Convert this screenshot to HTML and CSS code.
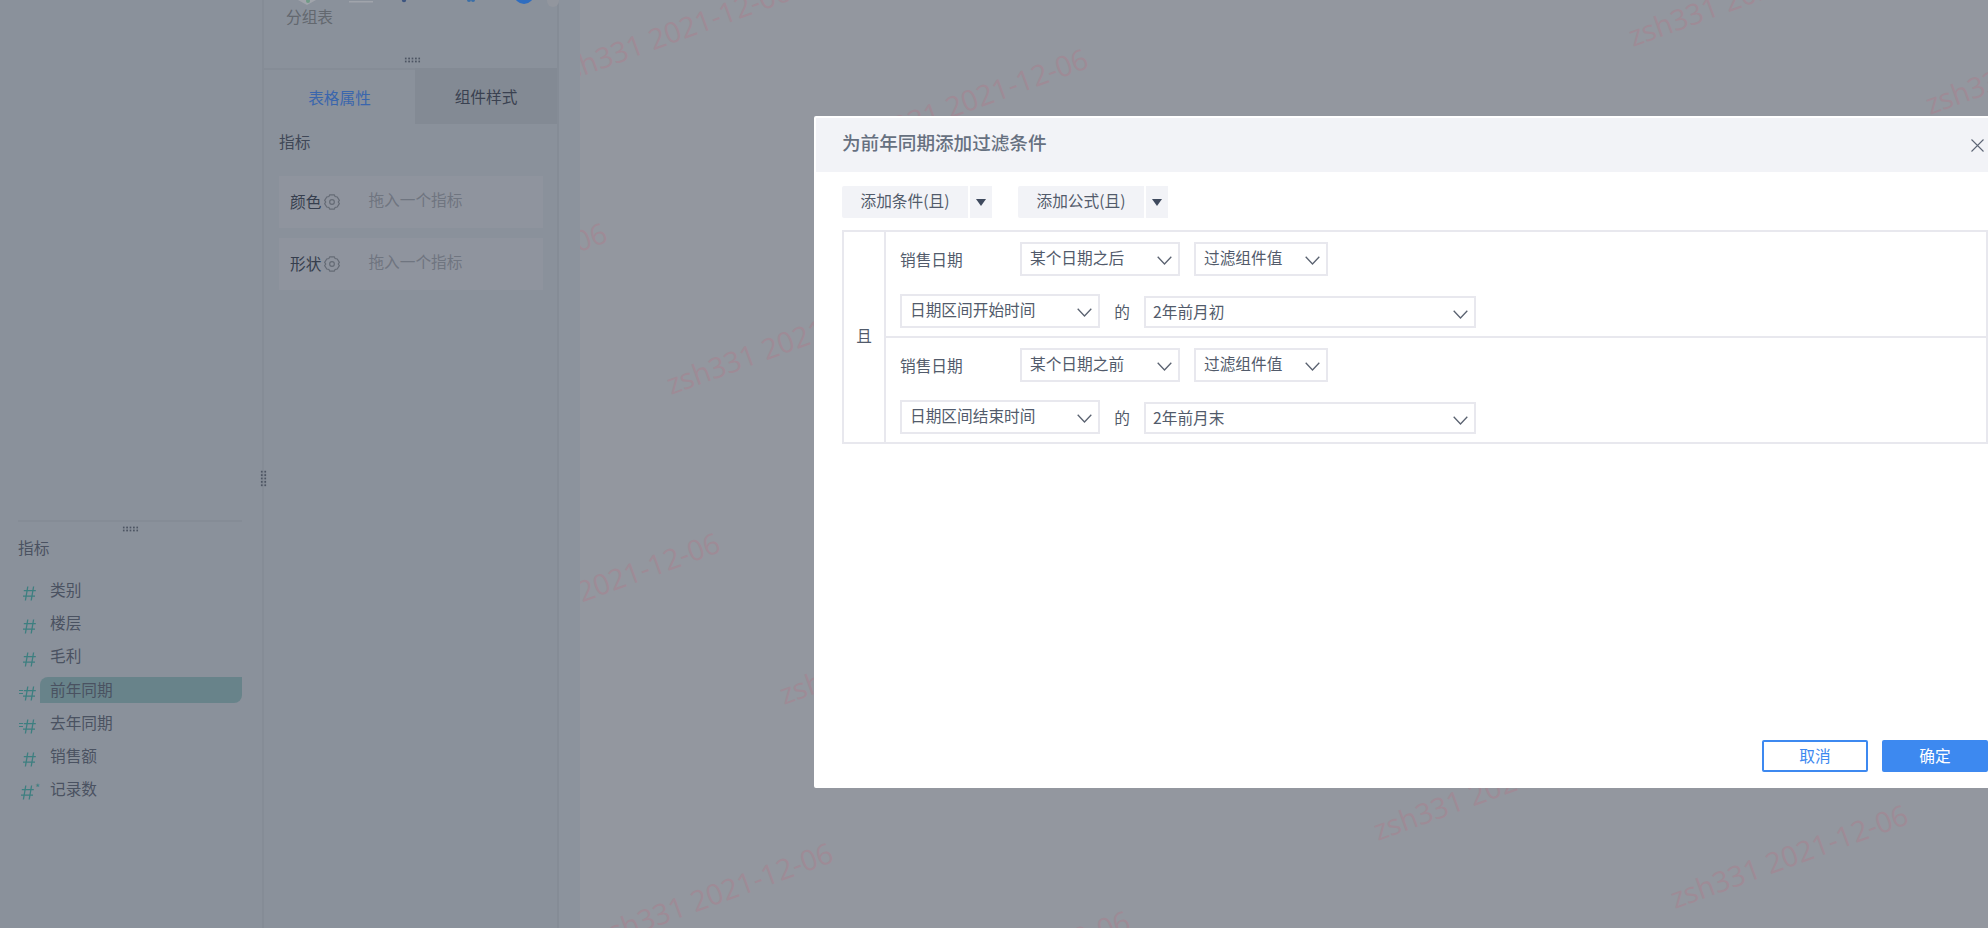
FILE: index.html
```html
<!DOCTYPE html>
<html lang="zh-CN">
<head>
    <meta charset="UTF-8">
    <meta name="viewport" content="width=device-width, initial-scale=1.0">
    <title>为前年同期添加过滤条件</title>
    <link rel="stylesheet" href="styles.css">
</head>
<body>
    <svg class="defs" width="0" height="0">
        <symbol id="hash" viewBox="0 0 13 15">
            <path d="M4.8 0.5 L2.4 14.5 M10.6 0.5 L8.2 14.5 M0.8 4.6 H12.8 M0 10.2 H12" fill="none" stroke="currentColor" stroke-width="1.3"/>
        </symbol>
        <symbol id="chevron" viewBox="0 0 15 9">
            <path d="M0.7 0.8 L7.5 8 L14.3 0.8" fill="none" stroke="currentColor" stroke-width="1.3"/>
        </symbol>
        <symbol id="gear" viewBox="0 0 15 15">
            <path d="M5.4 0.8 H9.6 L10.4 2.4 L12.4 2.8 L14.4 6 L13.4 7.5 L14.4 9 L12.4 12.2 L10.4 12.6 L9.6 14.2 H5.4 L4.6 12.6 L2.6 12.2 L0.6 9 L1.6 7.5 L0.6 6 L2.6 2.8 L4.6 2.4 Z" fill="none" stroke="currentColor" stroke-width="1.1"/>
            <circle cx="7.5" cy="7.5" r="2.2" fill="none" stroke="currentColor" stroke-width="1.1"/>
        </symbol>
    </svg>

    <div class="app">
        <aside class="fields-panel">
            <div class="panel-rule"></div>
            <div class="drag-dots fields-dots"></div>
            <h3 class="fields-title">指标</h3>
            <ul class="field-list">
                <li class="field-row"><span class="field-icon"><svg class="hash"><use href="#hash"/></svg></span><span>类别</span></li>
                <li class="field-row"><span class="field-icon"><svg class="hash"><use href="#hash"/></svg></span><span>楼层</span></li>
                <li class="field-row"><span class="field-icon"><svg class="hash"><use href="#hash"/></svg></span><span>毛利</span></li>
                <li class="field-row selected"><span class="field-icon"><i class="calc-mark"></i><svg class="hash"><use href="#hash"/></svg></span><span class="field-name">前年同期</span></li>
                <li class="field-row"><span class="field-icon"><i class="calc-mark"></i><svg class="hash"><use href="#hash"/></svg></span><span>去年同期</span></li>
                <li class="field-row"><span class="field-icon"><svg class="hash"><use href="#hash"/></svg></span><span>销售额</span></li>
                <li class="field-row"><span class="field-icon count"><svg class="hash"><use href="#hash"/></svg><i class="star">*</i></span><span>记录数</span></li>
            </ul>
            <div class="side-handle"></div>
        </aside>

        <section class="props-panel">
            <div class="chart-types">
                <svg class="type-strip" width="295" height="7" viewBox="0 0 295 7">
                    <path d="M33 -6 L52 0 L43 5 L34 0 Z" fill="#a0a4ab"/>
                    <circle cx="44" cy="1" r="2" fill="#6f9a86"/>
                    <rect x="85" y="1" width="24" height="1.5" fill="#a0a4ab"/>
                    <circle cx="140" cy="0" r="2.2" fill="#3d5580"/>
                    <circle cx="205" cy="0" r="2" fill="#3b6fa8"/>
                    <circle cx="209" cy="0" r="2" fill="#3b6fa8"/>
                    <circle cx="260" cy="-6" r="10" fill="#2f6dc0"/>
                    <circle cx="289" cy="1" r="6" fill="#92969e"/>
                </svg>
                <div class="type-name">分组表</div>
                <div class="drag-dots types-dots"></div>
            </div>
            <div class="tabs">
                <div class="tab active">表格属性</div>
                <div class="tab">组件样式</div>
            </div>
            <div class="props-body">
                <h3 class="props-title">指标</h3>
                <div class="drop-box">
                    <span class="drop-label">颜色</span>
                    <svg class="gear"><use href="#gear"/></svg>
                    <span class="drop-hint">拖入一个指标</span>
                </div>
                <div class="drop-box">
                    <span class="drop-label">形状</span>
                    <svg class="gear"><use href="#gear"/></svg>
                    <span class="drop-hint">拖入一个指标</span>
                </div>
            </div>
        </section>

        <div class="band"></div>

        <main class="canvas">
            <svg class="watermarks" viewBox="580 0 1408 928">
                <text transform="translate(1633 47) rotate(-20)">zsh331 2021-12-06</text>
                <text transform="translate(1930 115) rotate(-20)">zsh331 2021-12-06</text>
                <text transform="translate(558 85) rotate(-20)">zsh331 2021-12-06</text>
                <text transform="translate(855 153) rotate(-20)">zsh331 2021-12-06</text>
                <text transform="translate(374 327) rotate(-20)">zsh331 2021-12-06</text>
                <text transform="translate(671 395) rotate(-20)">zsh331 2021-12-06</text>
                <text transform="translate(487 637) rotate(-20)">zsh331 2021-12-06</text>
                <text transform="translate(784 705) rotate(-20)">zsh331 2021-12-06</text>
                <text transform="translate(1378 841) rotate(-20)">zsh331 2021-12-06</text>
                <text transform="translate(1675 909) rotate(-20)">zsh331 2021-12-06</text>
                <text transform="translate(600 947) rotate(-20)">zsh331 2021-12-06</text>
                <text transform="translate(897 1015) rotate(-20)">zsh331 2021-12-06</text>
            </svg>
        </main>
    </div>

    <div class="modal">
        <div class="modal-header">
            <span class="modal-title">为前年同期添加过滤条件</span>
            <svg class="close" width="13" height="13" viewBox="0 0 13 13"><path d="M0.5 0.5 L12.5 12.5 M12.5 0.5 L0.5 12.5" stroke="#5d6675" stroke-width="1.1"/></svg>
        </div>
        <div class="modal-body">
            <div class="toolbar">
                <div class="add-group">
                    <button class="add-btn">添加条件(且)</button>
                    <button class="caret-btn"><i class="caret"></i></button>
                </div>
                <div class="add-group">
                    <button class="add-btn">添加公式(且)</button>
                    <button class="caret-btn"><i class="caret"></i></button>
                </div>
            </div>
            <div class="filter-table">
                <div class="logic-cell">且</div>
                <div class="filter-rows">
                    <div class="filter-row">
                        <div class="line">
                            <span class="line-label">销售日期</span>
                            <div class="select w160"><span>某个日期之后</span><svg class="chevron"><use href="#chevron"/></svg></div>
                            <div class="select w134"><span>过滤组件值</span><svg class="chevron"><use href="#chevron"/></svg></div>
                        </div>
                        <div class="line second">
                            <div class="select w200"><span>日期区间开始时间</span><svg class="chevron"><use href="#chevron"/></svg></div>
                            <span class="of">的</span>
                            <div class="select w332"><span>2年前月初</span><svg class="chevron"><use href="#chevron"/></svg></div>
                        </div>
                    </div>
                    <div class="filter-row">
                        <div class="line">
                            <span class="line-label">销售日期</span>
                            <div class="select w160"><span>某个日期之前</span><svg class="chevron"><use href="#chevron"/></svg></div>
                            <div class="select w134"><span>过滤组件值</span><svg class="chevron"><use href="#chevron"/></svg></div>
                        </div>
                        <div class="line second">
                            <div class="select w200"><span>日期区间结束时间</span><svg class="chevron"><use href="#chevron"/></svg></div>
                            <span class="of">的</span>
                            <div class="select w332"><span>2年前月末</span><svg class="chevron"><use href="#chevron"/></svg></div>
                        </div>
                    </div>
                </div>
            </div>
        </div>
        <div class="modal-footer">
            <button class="btn-cancel">取消</button>
            <button class="btn-ok">确定</button>
        </div>
    </div>
</body>
</html>
```

FILE: styles.css
```css
* {
    box-sizing: border-box;
}

html, body {
    margin: 0;
    padding: 0;
    height: 100%;
    overflow: hidden;
}

body {
    font-family: "Noto Sans CJK SC", "Noto Sans", sans-serif;
    font-size: 15.7px;
    color: #4a5261;
    background: #8a919b;
    position: relative;
}

h3 {
    margin: 0;
    font-size: inherit;
    font-weight: 400;
}

.defs {
    position: absolute;
}

.app {
    display: flex;
    height: 928px;
}

/* left column */
.fields-panel {
    position: relative;
    width: 264px;
    flex: none;
    padding: 520px 20px 0 18px;
    border-right: 2px solid #858c96;
}

.panel-rule {
    height: 2px;
    background: #858c96;
}

.drag-dots {
    width: 17px;
    height: 6px;
    background-image: radial-gradient(circle, #4d5563 0.9px, transparent 1.2px);
    background-size: 3.4px 3px;
}

.fields-dots {
    margin: 4px auto 0;
}

.fields-title {
    margin-top: 6px;
    line-height: 20px;
}

.field-list {
    list-style: none;
    margin: 14.5px 0 0;
    padding: 0;
}

.field-row {
    display: flex;
    align-items: center;
    height: 33.3px;
}

.field-icon {
    width: 32px;
    display: flex;
    align-items: center;
    justify-content: flex-start;
    padding-left: 5px;
    color: #3d7f80;
    flex: none;
    position: relative;
    top: 4px;
}

.hash {
    width: 13px;
    height: 15px;
    flex: none;
}

.calc-mark {
    position: absolute;
    left: 1px;
    top: 4px;
    width: 4px;
    height: 4px;
    border-top: 1px solid #3d7f80;
    border-bottom: 1px solid #3d7f80;
}

.field-icon.count {
    padding-left: 3px;
}

.star {
    font-style: normal;
    font-size: 11px;
    line-height: 1;
    margin: -10px 0 0 1px;
}

.field-row.selected {
    position: relative;
}

.field-row.selected::before {
    content: "";
    position: absolute;
    left: 22px;
    right: 0;
    top: 5px;
    height: 26px;
    background: #68838a;
    border-radius: 8px 0 8px 0;
}

.field-row.selected .field-icon,
.field-row.selected .field-name {
    z-index: 1;
    position: relative;
}

.side-handle {
    position: absolute;
    right: -5px;
    top: 470px;
    width: 7px;
    height: 17px;
    background-image: radial-gradient(circle, #4d5563 1px, transparent 1.4px);
    background-size: 3.5px 3.4px;
}

/* middle column */
.props-panel {
    width: 295px;
    flex: none;
    border-right: 2px solid #858c96;
}

.chart-types {
    height: 68px;
}

.type-strip {
    display: block;
}

.type-name {
    line-height: 20px;
    padding-left: 22px;
    color: #63686f;
}

.types-dots {
    margin: 30px 0 0 140px;
}

.tabs {
    display: flex;
    height: 56px;
}

.tab {
    display: flex;
    align-items: center;
    justify-content: center;
    color: #3a4150;
    width: 151px;
}

.tab.active {
    color: #3a66ad;
    border-top: 2px solid #858c96;
}

.tab:not(.active) {
    flex: 1;
    background: #838a94;
}

.props-body {
    padding: 8px 14px 0 15px;
}

.props-title {
    line-height: 20px;
    margin-bottom: 24px;
    color: #3f4756;
}

.drop-box {
    display: flex;
    align-items: center;
    height: 52px;
    margin-bottom: 10px;
    padding-left: 11px;
    background: #8f949e;
    color: #363e4d;
}

.drop-label {
    margin-bottom: 2px;
}

.gear {
    width: 16px;
    height: 16px;
    color: #656b75;
    margin-left: 3px;
    flex: none;
}

.drop-hint {
    margin: 0 0 6px 28px;
    color: #6f7580;
}

/* right side */
.band {
    width: 21px;
    flex: none;
    background: #8c939d;
}

.canvas {
    flex: 1;
    position: relative;
    background: #93979f;
    overflow: hidden;
}

.watermarks {
    position: absolute;
    left: 0;
    top: 0;
    width: 100%;
    height: 100%;
}

.watermarks text {
    font-family: "Open Sans", sans-serif;
    font-size: 28.6px;
    fill: #9e8b96;
}

/* dialog */
.modal {
    position: absolute;
    left: 814px;
    top: 116px;
    width: 1176px;
    height: 672px;
    display: flex;
    flex-direction: column;
    background: #fff;
    border: 2px solid #fff;
    border-radius: 2px;
}

.modal-header {
    display: flex;
    align-items: center;
    justify-content: space-between;
    height: 54px;
    flex: none;
    padding: 0 4px 0 26px;
    background: #f2f3f7;
}

.modal-title {
    font-size: 18.6px;
    font-weight: 500;
    color: #667080;
    margin-bottom: 7px;
}

.modal-body {
    flex: 1;
    padding: 14px 0 0 26px;
}

.toolbar {
    display: flex;
    gap: 26px;
}

.add-group {
    display: flex;
    gap: 2px;
}

button {
    font: inherit;
    border: none;
    padding: 0;
}

.add-btn {
    width: 126px;
    height: 32px;
    padding-bottom: 4px;
    background: #f2f3f7;
    color: #525b6b;
    border-radius: 2px 0 0 2px;
}

.caret-btn {
    width: 22px;
    height: 32px;
    background: #f2f3f7;
    display: flex;
    align-items: center;
    justify-content: center;
}

.caret {
    width: 0;
    height: 0;
    border-left: 5.5px solid transparent;
    border-right: 5.5px solid transparent;
    border-top: 7px solid #3f4a5e;
}

.filter-table {
    display: flex;
    margin-top: 12px;
    border: 2px solid #e8e8ee;
}

.logic-cell {
    width: 42px;
    flex: none;
    display: flex;
    align-items: center;
    justify-content: center;
    padding-bottom: 4px;
    border-right: 2px solid #e8e8ee;
    color: #525b6b;
}

.filter-rows {
    flex: 1;
}

.filter-row {
    height: 104px;
    padding: 10px 0 0 14px;
}

.filter-row + .filter-row {
    height: 106px;
    border-top: 2px solid #e8e8ee;
}

.line {
    display: flex;
    align-items: flex-end;
    height: 34px;
}

.line.second {
    margin-top: 18px;
}

.line-label {
    width: 120px;
    flex: none;
    align-self: center;
    color: #525b6b;
}

.select {
    display: flex;
    align-items: center;
    justify-content: space-between;
    height: 34px;
    padding: 0 6px 4px 8px;
    border: 2px solid #e8e8ee;
    color: #525b6b;
    flex: none;
}

.chevron {
    width: 15px;
    height: 9px;
    color: #5a6270;
    margin-top: 6px;
    flex: none;
}

.w160 {
    width: 160px;
}

.w134 {
    width: 134px;
    margin-left: 14px;
}

.w200 {
    width: 200px;
}

.w332 {
    width: 332px;
    height: 32px;
    padding-left: 7px;
    padding-bottom: 2px;
}

.of {
    width: 44px;
    flex: none;
    text-align: center;
    align-self: center;
    color: #525b6b;
}

.modal-footer {
    display: flex;
    justify-content: flex-end;
    gap: 14px;
    padding-bottom: 14px;
}

.modal-footer button {
    width: 106px;
    height: 32px;
    padding-bottom: 2px;
    border-radius: 2px;
}

.btn-cancel {
    background: #fff;
    color: #3d89f0;
    border: 2px solid #3d89f0;
}

.btn-ok {
    background: #3d89f0;
    color: #fff;
}
```
